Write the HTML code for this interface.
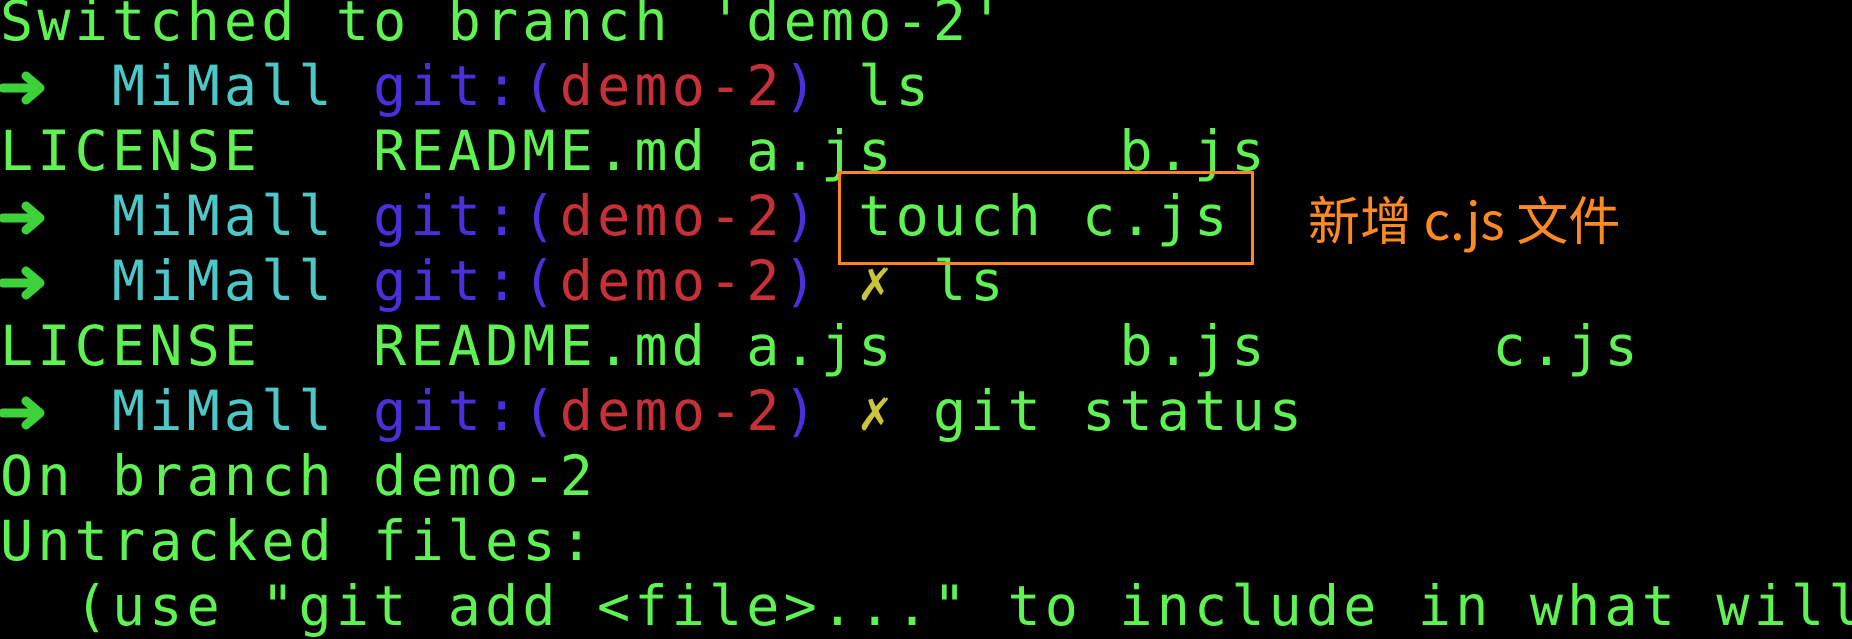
<!DOCTYPE html>
<html><head><meta charset="utf-8"><style>
html,body{margin:0;padding:0;background:#000;width:1852px;height:634px;overflow:hidden}
pre{position:absolute;left:0;top:-11px;margin:0;font-family:"DejaVu Sans Mono","Liberation Mono",monospace;font-size:55px;letter-spacing:4.2px;line-height:65px;color:#5ef252}
.c{color:#4cc8c8}.b{color:#4a2fdc}.r{color:#c83038}.y{color:#c9c43a;font-weight:bold}
.ar{position:absolute;left:0;width:50px;height:34px}
.box{position:absolute;left:838px;top:171px;width:410px;height:88px;border:3px solid #ff8424}
.note{position:absolute;left:1308px;top:188px;font-family:"Noto Sans CJK SC","Liberation Sans",sans-serif;font-size:52px;line-height:60px;color:#ff8a24;white-space:nowrap}
</style></head><body>
<pre>Switched to branch 'demo-2'
   <span class="c">MiMall</span> <span class="b">git:(</span><span class="r">demo-2</span><span class="b">)</span> ls
LICENSE   README.md a.js      b.js
   <span class="c">MiMall</span> <span class="b">git:(</span><span class="r">demo-2</span><span class="b">)</span> touch c.js
   <span class="c">MiMall</span> <span class="b">git:(</span><span class="r">demo-2</span><span class="b">)</span> <span class="y">✗</span> ls
LICENSE   README.md a.js      b.js      c.js
   <span class="c">MiMall</span> <span class="b">git:(</span><span class="r">demo-2</span><span class="b">)</span> <span class="y">✗</span> git status
On branch demo-2
Untracked files:
  (use "git add &lt;file&gt;..." to include in what will</pre>
<svg class="ar" style="top:71px" viewBox="0 0 50 34"><path d="M3 17H38M26 5L40 17L26 29" fill="none" stroke="#3ed23a" stroke-width="9" stroke-linecap="round" stroke-linejoin="round"/></svg>
<svg class="ar" style="top:201px" viewBox="0 0 50 34"><path d="M3 17H38M26 5L40 17L26 29" fill="none" stroke="#3ed23a" stroke-width="9" stroke-linecap="round" stroke-linejoin="round"/></svg>
<svg class="ar" style="top:266px" viewBox="0 0 50 34"><path d="M3 17H38M26 5L40 17L26 29" fill="none" stroke="#3ed23a" stroke-width="9" stroke-linecap="round" stroke-linejoin="round"/></svg>
<svg class="ar" style="top:396px" viewBox="0 0 50 34"><path d="M3 17H38M26 5L40 17L26 29" fill="none" stroke="#3ed23a" stroke-width="9" stroke-linecap="round" stroke-linejoin="round"/></svg>
<div class="box"></div>
<div class="note">新增 c.js 文件</div>
</body></html>
